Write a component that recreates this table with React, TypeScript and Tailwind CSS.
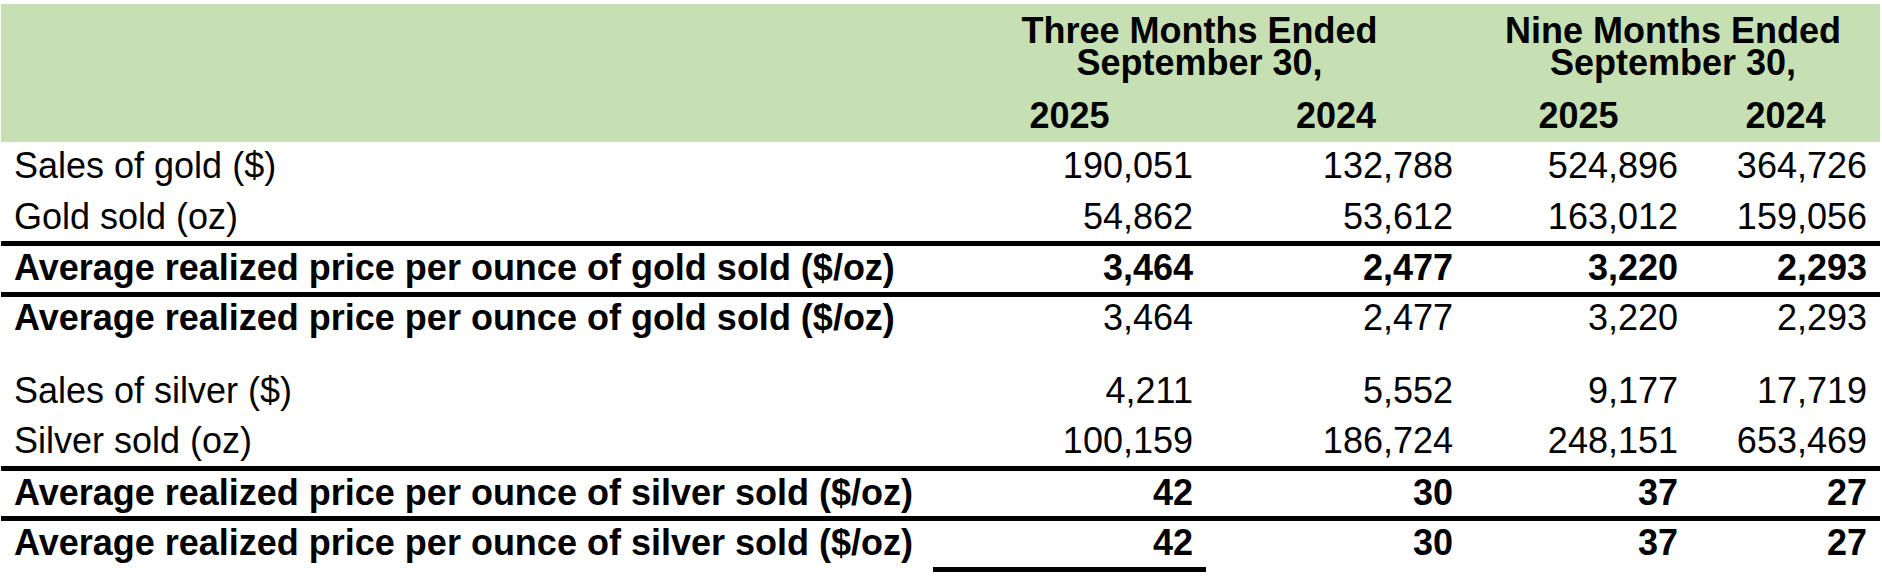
import React from "react";

type Row = {
  label: string;
  values: string[];
  boldLabel?: boolean;
  boldValues?: boolean;
  rowClass: string;
  padClass: string;
  underlineFirst?: boolean;
};

const rows: Row[] = [
  {
    label: "Sales of gold ($)",
    values: ["190,051", "132,788", "524,896", "364,726"],
    rowClass: "h-[49px]",
    padClass: "pt-[4px]",
  },
  {
    label: "Gold sold (oz)",
    values: ["54,862", "53,612", "163,012", "159,056"],
    rowClass: "h-[55px] border-b-[5px] border-black",
    padClass: "pt-[6px]",
  },
  {
    label: "Average realized price per ounce of gold sold ($/oz)",
    values: ["3,464", "2,477", "3,220", "2,293"],
    boldLabel: true,
    boldValues: true,
    rowClass: "h-[51px] border-b-[5px] border-black",
    padClass: "pt-[2px]",
  },
  {
    label: "Average realized price per ounce of gold sold ($/oz)",
    values: ["3,464", "2,477", "3,220", "2,293"],
    boldLabel: true,
    rowClass: "h-[69px]",
    padClass: "pt-[1px]",
  },
  {
    label: "Sales of silver ($)",
    values: ["4,211", "5,552", "9,177", "17,719"],
    rowClass: "h-[50px]",
    padClass: "pt-[5px]",
  },
  {
    label: "Silver sold (oz)",
    values: ["100,159", "186,724", "248,151", "653,469"],
    rowClass: "h-[55px] border-b-[5px] border-black",
    padClass: "pt-[5px]",
  },
  {
    label: "Average realized price per ounce of silver sold ($/oz)",
    values: ["42", "30", "37", "27"],
    boldLabel: true,
    boldValues: true,
    rowClass: "h-[50px] border-b-[5px] border-black",
    padClass: "pt-[2px]",
  },
  {
    label: "Average realized price per ounce of silver sold ($/oz)",
    values: ["42", "30", "37", "27"],
    boldLabel: true,
    boldValues: true,
    rowClass: "h-[51px]",
    padClass: "pt-[2px]",
    underlineFirst: true,
  },
];

const colWidths = ["w-[273px]", "w-[260px]", "w-[225px]", "w-[189px]"];
const years = ["2025", "2024", "2025", "2024"];

export default function App() {
  return (
    <div className="min-h-screen bg-white">
      <div
        className="ml-[1px] mt-[4px] w-[1879px] text-[36px] text-black"
        style={{ fontFamily: '"Liberation Sans", Arial, sans-serif' }}
      >
        {/* header band */}
        <div className="flex h-[138px] bg-[#C6E0B4]">
          <div className="w-[932px] shrink-0" />
          <div className="flex flex-col pt-[11px]">
            <div className="flex font-bold leading-[32px]">
              <div className="w-[533px] text-center">
                Three Months Ended
                <br />
                September 30,
              </div>
              <div className="w-[414px] text-center">
                Nine Months Ended
                <br />
                September 30,
              </div>
            </div>
            <div className="mt-[17px] flex font-bold leading-[40px]">
              {years.map((y, i) => (
                <div key={i} className={`${colWidths[i]} text-center`}>
                  {y}
                </div>
              ))}
            </div>
          </div>
        </div>

        {rows.map((row, r) => (
          <div key={r} className={`flex ${row.rowClass}`}>
            <div
              className={`w-[932px] shrink-0 pl-[13px] leading-[40px] whitespace-nowrap ${row.padClass} ${
                row.boldLabel ? "font-bold" : ""
              }`}
            >
              {row.label}
            </div>
            {row.values.map((v, i) => (
              <div
                key={i}
                className={`${colWidths[i]} shrink-0 pr-[13px] text-right leading-[40px] ${row.padClass} ${
                  row.boldValues ? "font-bold" : ""
                } ${row.underlineFirst && i === 0 ? "border-b-[5px] border-black" : ""}`}
              >
                {v}
              </div>
            ))}
          </div>
        ))}
      </div>
    </div>
  );
}
